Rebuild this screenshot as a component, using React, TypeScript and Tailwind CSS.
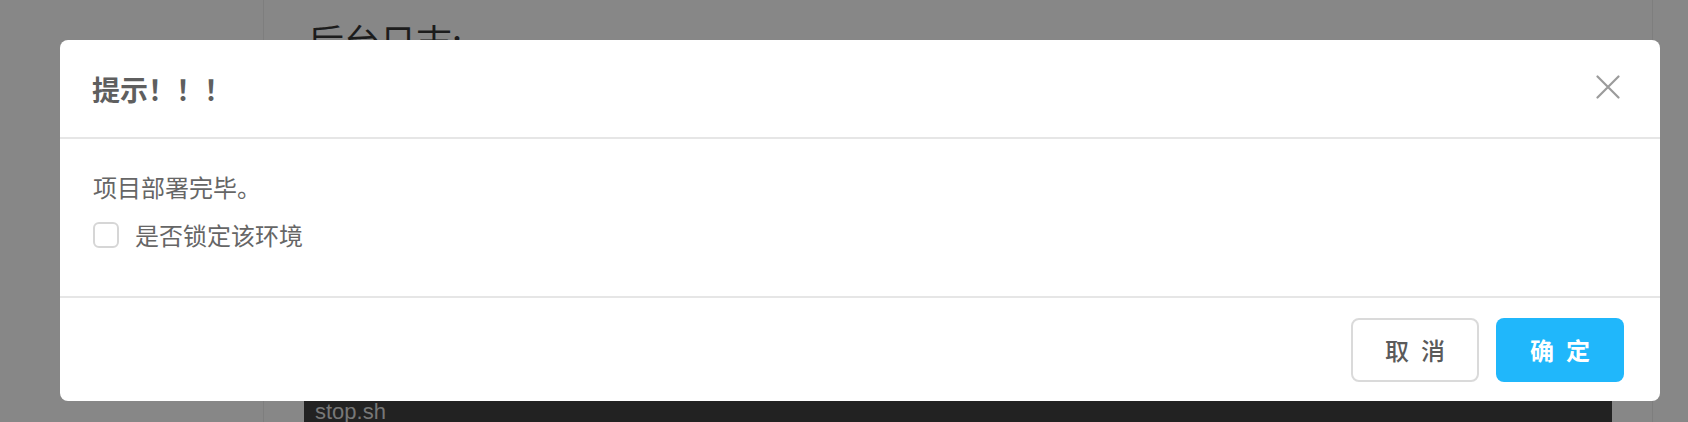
function CloseIcon() {
  return (
    <svg width="24" height="24" viewBox="0 0 24 24" fill="none" aria-hidden>
      <path d="M1.5 1.5L22.5 22.5M22.5 1.5L1.5 22.5" stroke="#9b9b9b" strokeWidth="2.2" strokeLinecap="round" />
    </svg>
  );
}

export default function App() {
  return (
    <div className="relative h-[422px] w-[1688px] overflow-hidden bg-[#878787] font-['Noto_Sans_CJK_SC','Noto_Sans',sans-serif]">
      {/* page behind the overlay */}
      <div className="flex h-full">
        <aside className="w-[264px] shrink-0 border-r border-[#7e7e7e]" />
        <main className="w-[1389px] shrink-0 border-r border-[#7e7e7e] px-[40px] pt-[22px]">
          <h2 className="pl-[4px] text-[36px] leading-none text-[#1c1c1c]">后台日志:</h2>
          <div className="mt-[343px] h-[40px] bg-[#222222] pl-[11px] font-['Liberation_Sans',sans-serif] text-[22px] leading-[22px] text-[#777777]">
            stop.sh
          </div>
        </main>
      </div>

      {/* modal */}
      <div className="absolute left-[60px] top-[40px] flex w-[1600px] flex-col rounded-[8px] bg-white">
        <div className="flex h-[99px] items-center justify-between border-b-2 border-[#e6e6e6] pl-[32px] pr-[40px]">
          <h3 className="text-[28px] font-bold leading-none text-[#5f5f5f]">提示！！！</h3>
          <button className="mb-[4px] flex h-[24px] w-[24px] items-center justify-center">
            <CloseIcon />
          </button>
        </div>
        <div className="flex h-[159px] flex-col border-b-2 border-[#e6e6e6] pl-[33px] pt-[31px] text-[24px] text-[#666666]">
          <p className="flex h-[34px] items-center">项目部署完毕。</p>
          <label className="mt-[18px] flex h-[26px] items-center gap-[16px]">
            <span className="h-[26px] w-[26px] shrink-0 rounded-[6px] border-2 border-[#d6d6d6] bg-white" />
            <span>是否锁定该环境</span>
          </label>
        </div>
        <div className="flex h-[103px] items-start justify-end gap-[17px] pr-[36px] pt-[20px]">
          <button className="flex h-[64px] w-[128px] items-center justify-center rounded-[8px] border-2 border-[#dadada] bg-white text-[24px] font-medium text-[#5a5a5a]">
            <span className="mr-[-12px] tracking-[12px]">取消</span>
          </button>
          <button className="flex h-[64px] w-[128px] items-center justify-center rounded-[8px] bg-[#20b7fb] text-[24px] font-semibold text-white">
            <span className="mr-[-12px] tracking-[12px]">确定</span>
          </button>
        </div>
      </div>
    </div>
  );
}
